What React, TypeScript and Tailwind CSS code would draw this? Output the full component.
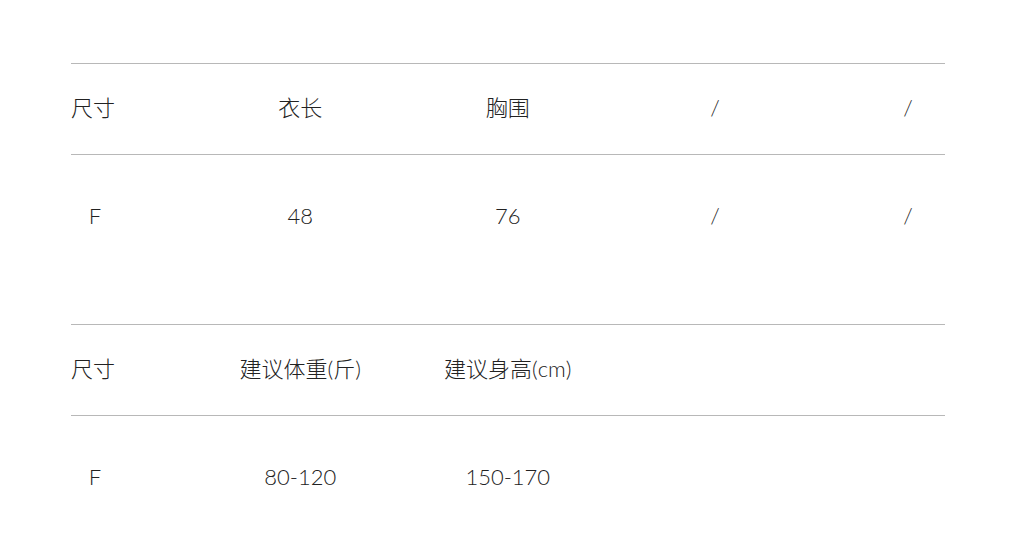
import React from 'react';

type Row = string[];

interface SizeTableProps {
  head: Row;
  body: Row;
}

const cols = 'grid grid-cols-[125.5px_207.5px_207.5px_207px_179px]';

const Cell: React.FC<{ text: string; first?: boolean }> = ({ text, first }) => (
  <div className={first ? 'flex items-center' : 'flex items-center justify-center'}>
    {first ? <span className="w-[48px] text-center">{text}</span> : <span>{text}</span>}
  </div>
);

const SizeTable: React.FC<SizeTableProps> = ({ head, body }) => {
  return (
    <div className="w-[874px]">
      <div className={`${cols} h-[92px] pb-[3px] border-t border-b border-[#b8b8b8]`}>
        {head.map((t, i) =>
          i === 0 ? (
            <div key={i} className="flex items-center">
              <span>{t}</span>
            </div>
          ) : (
            <Cell key={i} text={t} />
          )
        )}
      </div>
      <div className={`${cols} h-[124px] pb-[4px]`}>
        {body.map((t, i) => (
          <Cell key={i} text={t} first={i === 0} />
        ))}
      </div>
    </div>
  );
};

export default function App() {
  return (
    <div
      className="w-[1024px] h-[557px] bg-white overflow-hidden pt-[63px] pl-[71px] text-[22px] font-light text-[#222222]"
      style={{ fontFamily: 'Lato, "Noto Sans CJK SC", sans-serif' }}
    >
      <SizeTable head={['尺寸', '衣长', '胸围', '/', '/']} body={['F', '48', '76', '/', '/']} />
      <div className="h-[45px]" />
      <SizeTable head={['尺寸', '建议体重(斤)', '建议身高(cm)', '', '']} body={['F', '80-120', '150-170', '', '']} />
    </div>
  );
}
